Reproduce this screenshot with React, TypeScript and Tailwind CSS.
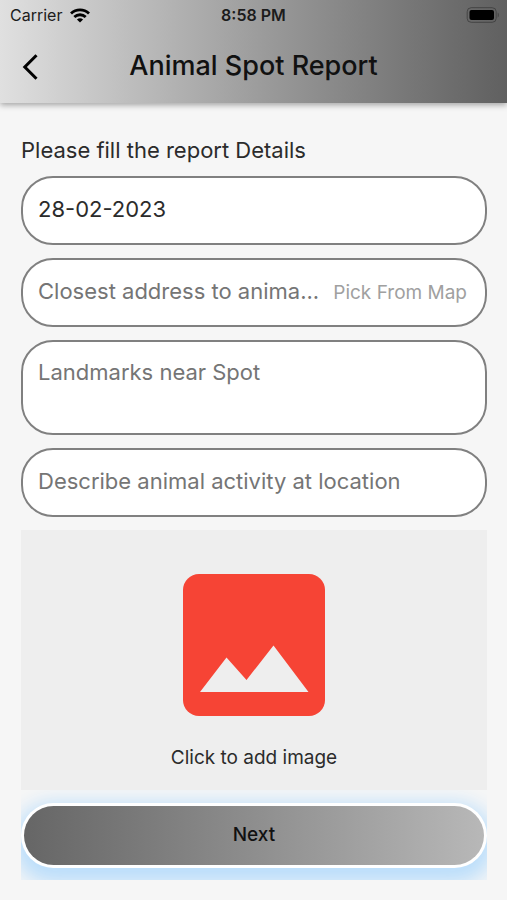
import { useState, type ReactNode } from "react";

const fieldBox =
  "flex items-center rounded-[32px] border-2 border-[#808080] bg-white pl-[15px] pr-4";
const fieldText =
  "w-full min-w-0 bg-transparent pb-[3px] text-[22px] leading-7 text-[#2b2b2b] outline-none placeholder:text-[#757575]";

function StatusBar() {
  return (
    <div className="grid h-[30px] grid-cols-3 items-center px-2 text-base text-[#1c1c1c]">
      <div className="flex items-center gap-2 pl-0.5">
        <span>Carrier</span>
        <svg viewBox="0 0 20 15" className="h-[15px] w-5" fill="none" stroke="#000" strokeWidth="2.8">
          <path d="M1 5.4a13 13 0 0 1 18 0" />
          <path d="M4.3 9a8.3 8.3 0 0 1 11.4 0" />
          <path d="M10 14.6 6.9 11.6a4.5 4.5 0 0 1 6.2 0Z" fill="#000" stroke="none" />
        </svg>
      </div>
      <span className="text-center font-semibold">8:58 PM</span>
      <svg viewBox="0 0 33 16" className="h-4 w-[33px] justify-self-end">
        <rect x="1.2" y="0.7" width="29" height="14.6" rx="4" fill="none" stroke="#444" />
        <rect x="3.5" y="3" width="24.5" height="10" rx="2" fill="#000" />
        <path d="M31.7 5.6c1.6.8 1.6 4 0 4.8Z" fill="#444" />
      </svg>
    </div>
  );
}

function Header() {
  return (
    <header className="h-[103px] bg-linear-to-r from-[#e0e0e0] to-[#606060] shadow-[0_2px_6px_rgba(0,0,0,0.35)]">
      <StatusBar />
      <div className="grid h-[73px] grid-cols-[60px_1fr_60px] items-center">
        <button type="button" aria-label="Back" className="flex h-12 items-center justify-center">
          <svg viewBox="0 0 16 26" className="h-[26px] w-4" fill="none" stroke="#000" strokeWidth="3">
            <path d="M14.5 1.2 2.8 13 14.5 24.8" />
          </svg>
        </button>
        <h1 className="text-center text-[27px] font-medium text-[#111]">Animal Spot Report</h1>
      </div>
    </header>
  );
}

function Field({ className, children }: { className: string; children: ReactNode }) {
  return <div className={`${fieldBox} ${className}`}>{children}</div>;
}

export default function App() {
  const [date, setDate] = useState("28-02-2023");

  return (
    <div className="min-h-screen bg-[#f6f6f6] font-['Inter',sans-serif]">
      <Header />
      <form className="pt-[33px] pr-5 pl-[21px]" onSubmit={(e) => e.preventDefault()}>
        <label htmlFor="date" className="block text-[22px] leading-7 text-[#2b2b2b]">
          Please fill the report Details
        </label>

        <div className="mt-3 flex flex-col gap-[13px]">
          <Field className="h-[69px]">
            <input id="date" value={date} onChange={(e) => setDate(e.target.value)} className={fieldText} />
          </Field>
          <Field className="h-[69px] gap-2">
            <input aria-label="Closest address" placeholder="Closest address to anima..." className={fieldText} />
            <button type="button" className="shrink-0 pt-0.5 pr-0.5 text-[19px] text-[#a0a0a0]">
              Pick From Map
            </button>
          </Field>
          <Field className="h-[95px]">
            <textarea
              aria-label="Landmarks"
              rows={2}
              placeholder="Landmarks near Spot"
              className={`${fieldText} resize-none`}
            />
          </Field>
          <Field className="h-[69px]">
            <input
              aria-label="Animal activity"
              placeholder="Describe animal activity at location"
              className={fieldText}
            />
          </Field>
          <button type="button" className="flex h-[260px] flex-col items-center bg-[#eee] pt-11">
            <svg viewBox="0 0 142 142" className="size-[142px]">
              <rect width="142" height="142" rx="16" fill="#f64435" />
              <path d="M17 118 43.5 83.5 63.5 106 90.5 71.5 125.5 118Z" fill="#eee" />
            </svg>
            <span className="mt-7 text-[19px] leading-7 text-[#2b2b2b]">Click to add image</span>
          </button>
        </div>

        {/* the glow is cut off at the edges of this strip */}
        <div className="h-[90px] overflow-hidden pt-[13px]">
          <button
            type="submit"
            className="h-[65px] w-full rounded-full bg-white p-[3px] shadow-[0_8px_20px_8px_#bbdefb]"
          >
            <span className="flex h-full items-center justify-center rounded-full bg-linear-to-r from-[#666] to-[#b8b8b8] text-[19px] font-medium text-[#111]">
              Next
            </span>
          </button>
        </div>
      </form>
    </div>
  );
}
